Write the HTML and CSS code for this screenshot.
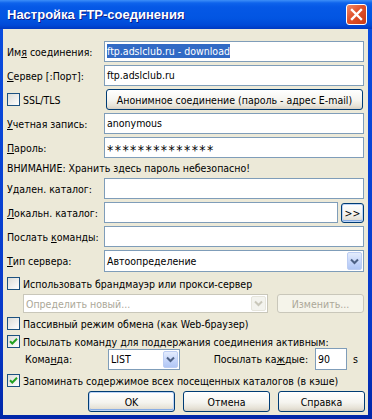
FILE: index.html
```html
<!DOCTYPE html>
<html lang="ru">
<head>
  <meta charset="UTF-8">
  <title>Настройка FTP-соединения</title>
  <link rel="stylesheet" href="styles.css">
</head>
<body>
  <div class="window">
    <div class="titlebar">
      <span class="title">Настройка FTP-соединения</span>
      <span class="close">
        <svg width="13" height="13" viewBox="0 0 13 13"><path d="M2 2 L11 11 M11 2 L2 11" stroke="#fff" stroke-width="2.4" stroke-linecap="square"/></svg>
      </span>
    </div>

    <div class="client">
      <div class="form">
        <span class="lbl">Им<u>я</u> соединения:</span>
        <div class="field"><span class="sel">ftp.adslclub.ru - download</span></div>

        <span class="lbl"><u>С</u>ервер [:Порт]:</span>
        <div class="field">ftp.adslclub.ru</div>

        <span class="lbl cb-line"><span class="cb"></span>SSL/TLS</span>
        <div class="btn anon">Анонимное соединение (пароль - адрес E-mail)</div>

        <span class="lbl"><u>У</u>четная запись:</span>
        <div class="field">anonymous</div>

        <span class="lbl"><u>П</u>ароль:</span>
        <div class="field pass">**************</div>

        <span class="warn">ВНИМАНИЕ: Хранить здесь пароль небезопасно!</span>

        <span class="lbl">У<u>д</u>ален. каталог:</span>
        <div class="field"></div>

        <span class="lbl"><u>Л</u>окальн. каталог:</span>
        <div class="local">
          <div class="field"></div>
          <div class="btn small focus">&gt;&gt;</div>
        </div>

        <span class="lbl">Послать <u>к</u>оманды:</span>
        <div class="field"></div>

        <span class="lbl"><u>Т</u>ип сервера:</span>
        <div class="combo tall">
          <span class="combo-text">Автоопределение</span>
          <span class="arrow"><svg width="9" height="7" viewBox="0 0 9 7"><path d="M1 1.5 L4.5 5 L8 1.5" fill="none" stroke="#4d6185" stroke-width="2"/></svg></span>
        </div>
      </div>

      <div class="cb-row first"><span class="cb"></span>Использовать брандмауэр или прокси-сервер</div>

      <div class="proxy">
        <div class="combo off">
          <span class="combo-text">Определить новый...</span>
          <span class="arrow"><svg width="9" height="7" viewBox="0 0 9 7"><path d="M1 1.5 L4.5 5 L8 1.5" fill="none" stroke="#c9c7ba" stroke-width="2"/></svg></span>
        </div>
        <div class="btn off">Изменить...</div>
      </div>

      <div class="cb-row passive"><span class="cb"></span>Пассивный режим обмена (как Web-браузер)</div>

      <div class="cb-row keep"><span class="cb"><svg width="11" height="11" viewBox="0 0 11 11"><path d="M2 5.2 L4.3 7.5 L9 2.8" fill="none" stroke="#21a121" stroke-width="2"/></svg></span>Посылать команду для поддержания соединения активным:</div>

      <div class="cmd">
        <span class="cmd-lbl">Кома<u>н</u>да:</span>
        <div class="combo list">
          <span class="combo-text">LIST</span>
          <span class="arrow"><svg width="9" height="7" viewBox="0 0 9 7"><path d="M1 1.5 L4.5 5 L8 1.5" fill="none" stroke="#4d6185" stroke-width="2"/></svg></span>
        </div>
        <span class="every">Посылать ка<u>ж</u>дые:</span>
        <div class="field secs">90</div>
        <span class="unit">s</span>
      </div>

      <div class="cb-row cache"><span class="cb"><svg width="11" height="11" viewBox="0 0 11 11"><path d="M2 5.2 L4.3 7.5 L9 2.8" fill="none" stroke="#21a121" stroke-width="2"/></svg></span>Запоминать содержимое всех посещенных каталогов (в кэше)</div>

      <div class="buttons">
        <div class="btn dlg focus">OK</div>
        <div class="btn dlg">Отмена</div>
        <div class="btn dlg">Справка</div>
      </div>
    </div>
  </div>
</body>
</html>
```

FILE: styles.css
```css
* { box-sizing: border-box; }
body {
  margin: 0;
  font-family: "DejaVu Sans Condensed", "Liberation Sans", sans-serif;
  font-size: 10.5px;
  color: #000;
}
u { text-decoration: underline; text-underline-offset: 1px; }

.window {
  width: 372px;
  height: 419px;
  background: linear-gradient(#0a4ee0, #0838c8 80%, #0026a8);
  display: flex;
  flex-direction: column;
}
.titlebar {
  height: 29px;
  flex: none;
  background: linear-gradient(#3d8ff8 0, #0e63ec 3px, #0558e6 7px, #0255e2 18px, #004ad8 25px, #0038c0 29px);
  display: flex;
  align-items: center;
  justify-content: space-between;
  padding: 0 5px 0 7px;
}
.title {
  color: #fff;
  font: bold 13px "Liberation Sans", sans-serif;
  text-shadow: 1px 1px #0c1a8a;
}
.close {
  width: 21px;
  height: 21px;
  border: 1px solid #fff;
  border-radius: 3px;
  background: linear-gradient(135deg, #f08a6a, #e0512b 45%, #c93a14);
  display: flex;
  align-items: center;
  justify-content: center;
}

.client {
  flex: 1;
  margin: 0 4px 4px 3px;
  background: #ece9d8;
  padding: 12px 4px 0 4px;
}

.form {
  display: grid;
  grid-template-columns: 97px 260px;
  row-gap: 3px;
  align-items: center;
}
.lbl { white-space: nowrap; }
.cb-line, .cb-row { display: flex; align-items: center; white-space: nowrap; }
.warn { grid-column: 1 / -1; height: 14px; line-height: 14px; }

.field {
  height: 21px;
  border: 1px solid #7f9db9;
  background: #fff;
  padding-left: 2px;
  line-height: 19px;
  white-space: nowrap;
}
.field.pass {
  font-size: 14px;
  letter-spacing: 1.4px;
  line-height: 24px;
  overflow: hidden;
}
.sel { background: #316ac5; color: #fff; padding: 1px 0; }

.local { display: flex; gap: 3px; align-items: center; }
.local .field { flex: 1; }

.btn {
  height: 21px;
  border: 1px solid #003c74;
  border-radius: 3px;
  background: linear-gradient(#ffffff, #f5f4ef 55%, #e6e2d6 85%, #d6d0c5);
  display: flex;
  align-items: center;
  justify-content: center;
  white-space: nowrap;
}
.btn.anon { margin: 0 1px 0 2px; }
.btn.small { width: 23px; height: 20px; flex: none; }
.btn.focus { box-shadow: inset 0 0 0 1px #bcd4f6, inset 0 -1px 0 1px #89ade4; }
.btn.off {
  border-color: #c9c7ba;
  background: #f5f4ea;
  color: #aca899;
  width: 87px;
  height: 19px;
  flex: none;
}

.cb {
  width: 13px;
  height: 13px;
  flex: none;
  border: 1px solid #1c5180;
  background: linear-gradient(135deg, #dcdcd7, #ffffff);
  margin-right: 3px;
  display: flex;
  align-items: center;
  justify-content: center;
}

.combo {
  height: 21px;
  border: 1px solid #7f9db9;
  background: #fff;
  display: flex;
  align-items: center;
  justify-content: space-between;
  padding: 0 1px 0 2px;
}
.combo.tall { height: 22px; }
.arrow {
  width: 15px;
  height: calc(100% - 2px);
  border: 1px solid #bccdf3;
  border-radius: 2px;
  background: linear-gradient(#e4ecfd, #c3d4fa 60%, #b1c7f5);
  display: flex;
  align-items: center;
  justify-content: center;
}
.combo.off { width: 247px; height: 19px; border-color: #c9c7ba; color: #aca899; }
.combo.off .arrow { border-color: #e6e5dc; background: #f3f3ee; }

.cb-row { height: 17px; }
.cb-row.first { margin-top: 3px; }
.proxy {
  display: flex;
  gap: 9px;
  margin: 2px 0 0 16px;
}
.cb-row.passive { margin-top: 2px; }
.cb-row.keep { margin-top: 1px; height: 15px; align-items: flex-end; }
.cmd { display: flex; align-items: center; height: 22px; padding: 0 6px 0 18px; }
.cmd-lbl { width: 83px; }
.combo.list { width: 72px; }
.every { margin-left: auto; }
.field.secs { width: 32px; height: 22px; line-height: 20px; margin-left: 7px; }
.unit { margin-left: 6px; }
.cb-row.cache { margin-top: 2px; }

.buttons {
  display: flex;
  justify-content: flex-end;
  gap: 8px;
  margin: 2px -1px 0 0;
}
.btn.dlg { width: 87px; }
```
